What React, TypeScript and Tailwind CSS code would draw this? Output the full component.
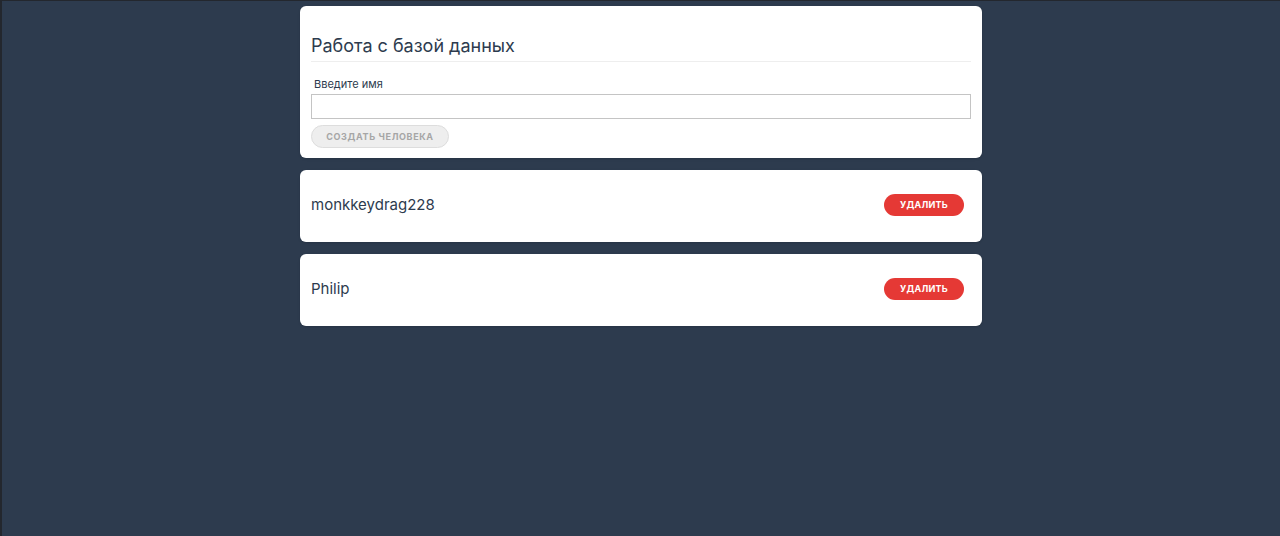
const people = ['monkkeydrag228', 'Philip']

function PersonCard({ name }: { name: string }) {
  return (
    <div className="flex h-[72px] items-center justify-between rounded-md bg-white pl-[11px] pr-[18px] shadow">
      <span className="pb-[1px] text-[15px] text-[#2d3b4e]">{name}</span>
      <button className="mb-[2px] h-[22px] w-[80px] rounded-full bg-[#e53935] text-[9px] font-bold tracking-wide text-white">
        УДАЛИТЬ
      </button>
    </div>
  )
}

export default function App() {
  return (
    <div
      className="min-h-[536px] border-l-2 border-t border-[#23272e] bg-[#2d3b4e]"
      style={{ fontFamily: 'Inter, "Noto Sans", sans-serif' }}
    >
      <div className="mx-auto flex w-[682px] flex-col gap-[12px] pt-[5px]">
        <div className="rounded-md bg-white px-[11px] pb-[10px] shadow">
          <div className="border-b border-[#eeeeee] pt-[28px] pb-[3px] text-[18px] leading-[24px] text-[#2d3b4e]">
            Работа с базой данных
          </div>
          <div className="mt-[15px] pl-[3px] text-[11px] leading-[14px] text-[#2d3b4e]">Введите имя</div>
          <input className="mt-[3px] block h-[25px] w-full border border-[#c4c4c4] outline-none" />
          <button className="mt-[6px] h-[23px] w-[138px] rounded-full border border-[#dddddd] bg-[#eeeeee] text-[9px] font-bold tracking-[0.07em] text-[#a6a6a6]">
            СОЗДАТЬ ЧЕЛОВЕКА
          </button>
        </div>
        {people.map((p) => (
          <PersonCard key={p} name={p} />
        ))}
      </div>
    </div>
  )
}
